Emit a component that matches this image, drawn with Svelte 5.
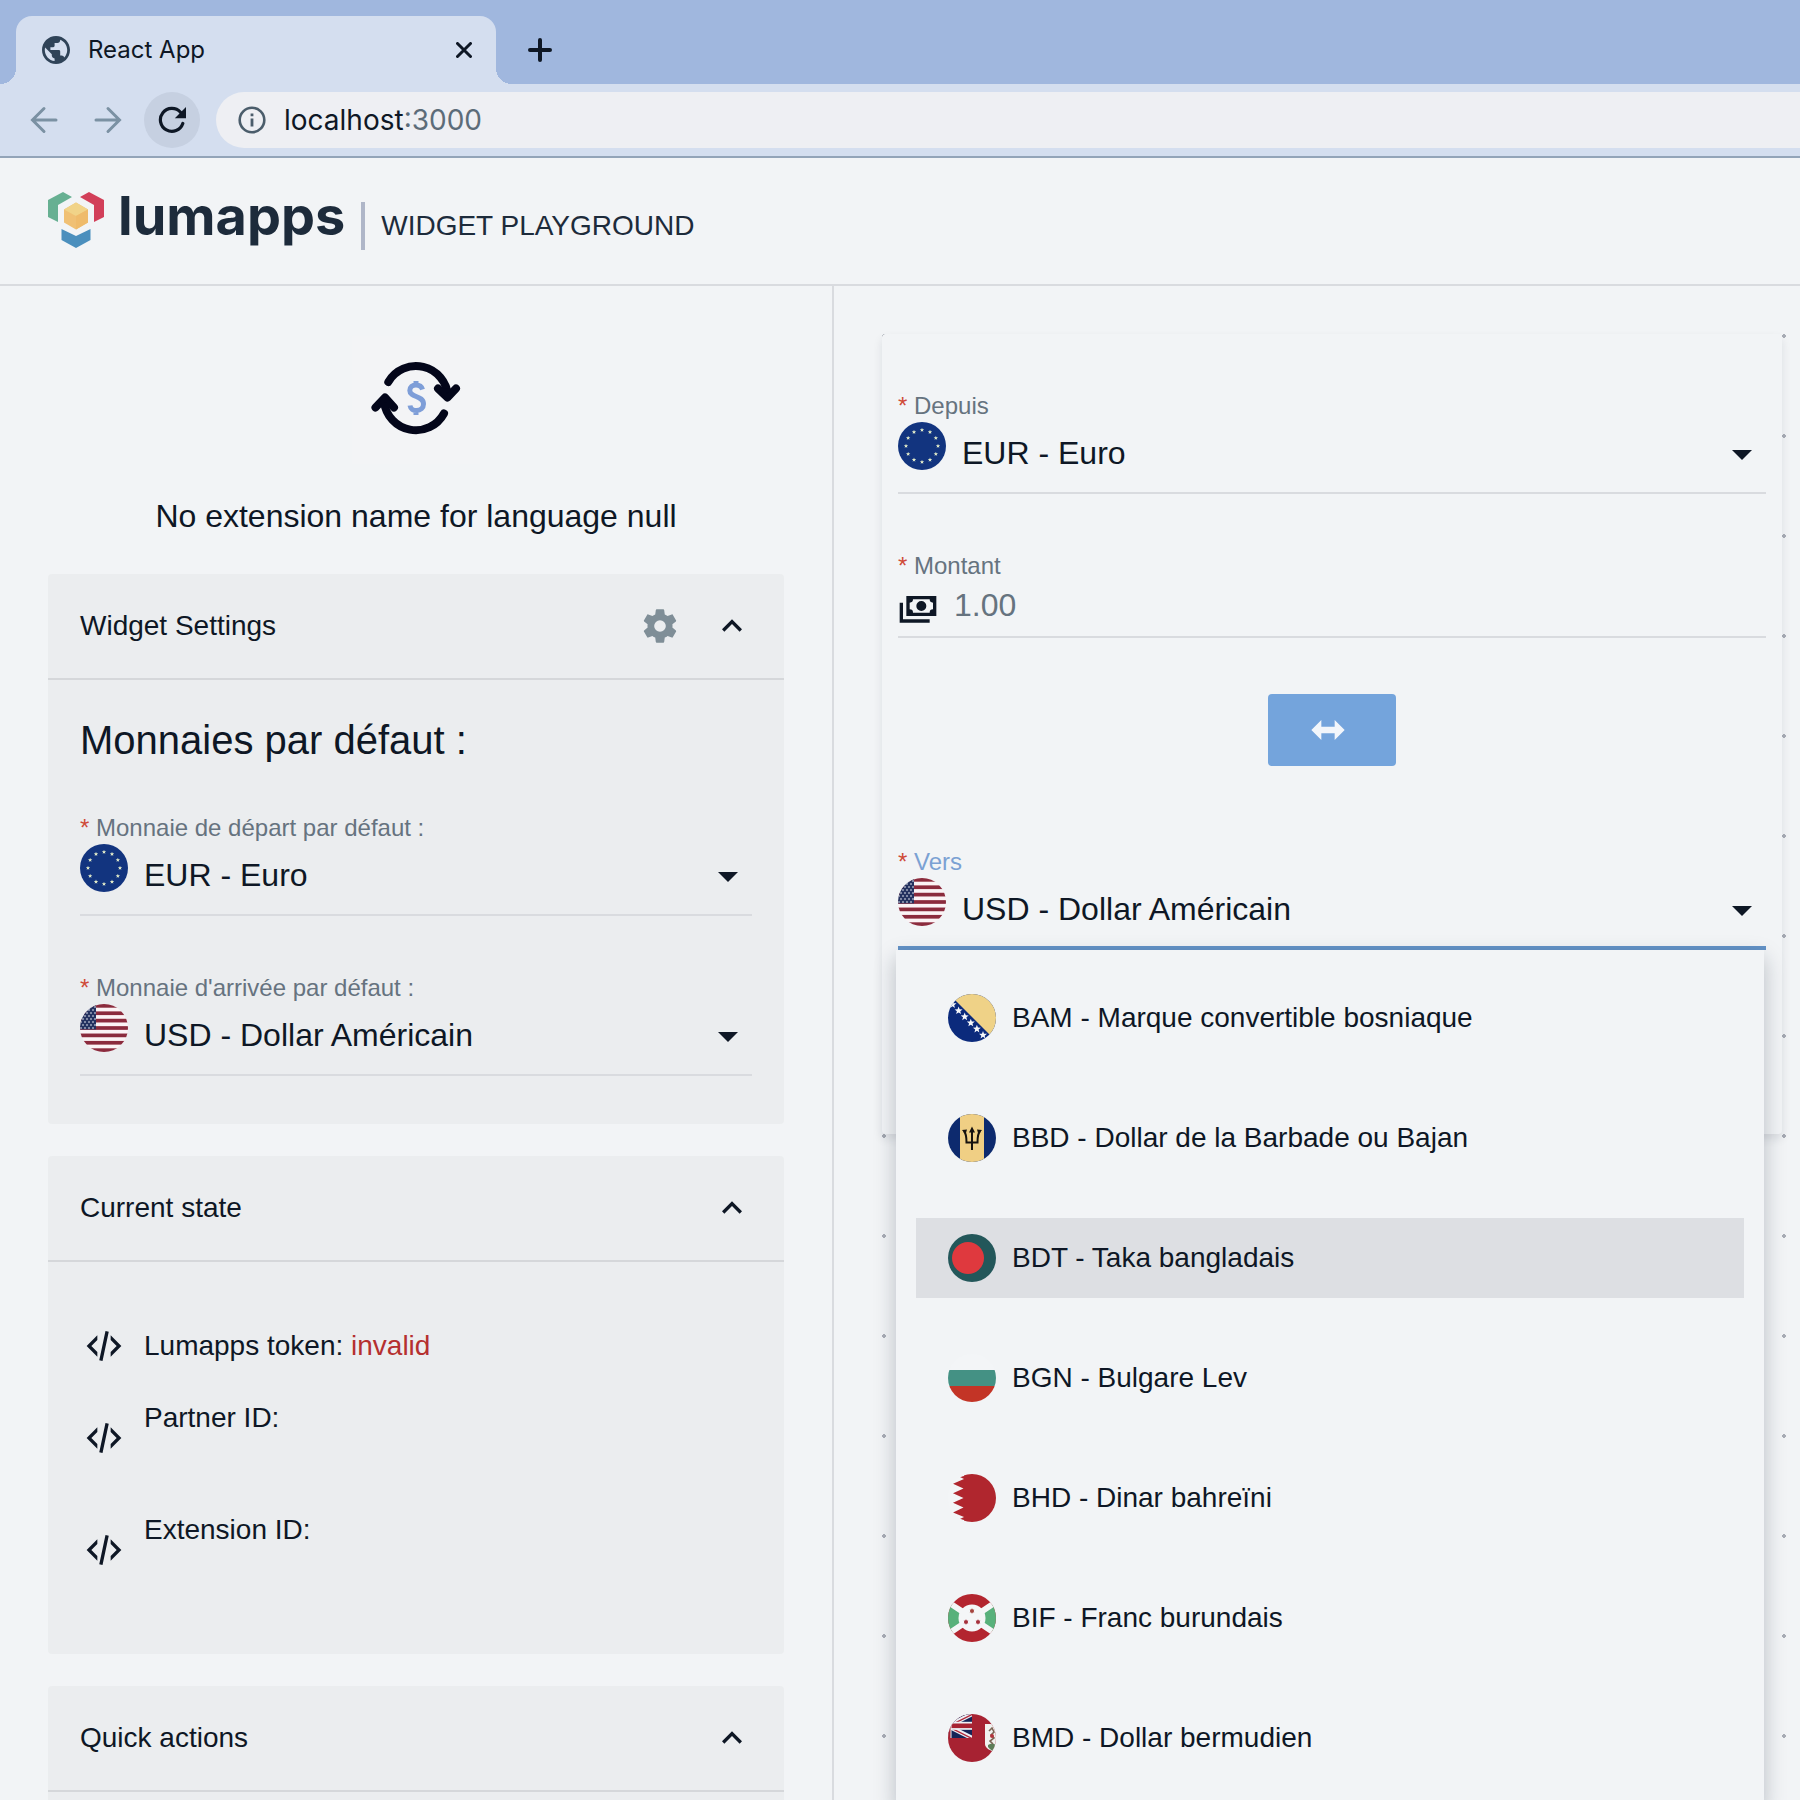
<script>
  let from = $state('EUR');
  let to = $state('USD');
  let defaultFrom = $state('EUR');
  let defaultTo = $state('USD');
  let amount = $state('');
  let active = $state('BDT');

  const currencies = [
    { code: 'EUR', name: 'Euro' },
    { code: 'USD', name: 'Dollar Américain' }
  ];

  const suggestions = [
    { code: 'BAM', name: 'Marque convertible bosniaque' },
    { code: 'BBD', name: 'Dollar de la Barbade ou Bajan' },
    { code: 'BDT', name: 'Taka bangladais' },
    { code: 'BGN', name: 'Bulgare Lev' },
    { code: 'BHD', name: 'Dinar bahreïni' },
    { code: 'BIF', name: 'Franc burundais' },
    { code: 'BMD', name: 'Dollar bermudien' }
  ];

  function star(cx, cy, r, points = 5, inner = 0.42) {
    return Array.from({ length: points * 2 }, (_, i) => {
      const a = (Math.PI * i) / points - Math.PI / 2;
      const d = i % 2 ? r * inner : r;
      return `${(cx + d * Math.cos(a)).toFixed(2)},${(cy + d * Math.sin(a)).toFixed(2)}`;
    }).join(' ');
  }

  const euStars = Array.from({ length: 12 }, (_, i) => {
    const a = (Math.PI * i) / 6;
    return star(24 + 16 * Math.sin(a), 24 - 16 * Math.cos(a), 2.3);
  });
  const usStars = [3, 6, 9, 12, 15, 18, 21, 24].flatMap((y, row) =>
    (row % 2 ? [1, 5, 9, 13] : [3, 7, 11, 15]).map((x) => [x, y])
  );
  const bamStars = [0, 1, 2, 3, 4, 5].map((i) => star(4.5 + i * 6.1, 10.6 + i * 6.1, 4.2));

  const paths = {
    up: 'M7.41,15.41L12,10.83L16.59,15.41L18,14L12,8L6,14L7.41,15.41Z',
    down: 'M7,10L12,15L17,10H7Z',
    code: 'M12.89,3L14.85,3.4L11.11,21L9.15,20.6L12.89,3M19.59,12L16,8.41V5.58L22.42,12L16,18.41V15.58L19.59,12M1.58,12L8,5.58V8.41L4.41,12L8,15.58V18.41L1.58,12Z',
    swap: 'M8,14V18L2,12L8,6V10H16V6L22,12L16,18V14H8Z',
    cash: 'M5,6H23V18H5V6M14,9A3,3 0 0,1 17,12A3,3 0 0,1 14,15A3,3 0 0,1 11,12A3,3 0 0,1 14,9M9,8A2,2 0 0,1 7,10V14A2,2 0 0,1 9,16H19A2,2 0 0,1 21,14V10A2,2 0 0,1 19,8H9M1,10H3V20H19V22H1V10Z',
    cog: 'M12,15.5A3.5,3.5 0 0,1 8.5,12A3.5,3.5 0 0,1 12,8.5A3.5,3.5 0 0,1 15.5,12A3.5,3.5 0 0,1 12,15.5M19.43,12.97C19.47,12.65 19.5,12.33 19.5,12C19.5,11.67 19.47,11.34 19.43,11L21.54,9.37C21.73,9.22 21.78,8.95 21.66,8.73L19.66,5.27C19.54,5.05 19.27,4.96 19.05,5.05L16.56,6.05C16.04,5.66 15.5,5.32 14.87,5.07L14.5,2.42C14.46,2.18 14.25,2 14,2H10C9.75,2 9.54,2.18 9.5,2.42L9.13,5.07C8.5,5.32 7.96,5.66 7.44,6.05L4.95,5.05C4.73,4.96 4.46,5.05 4.34,5.27L2.34,8.73C2.21,8.95 2.27,9.22 2.46,9.37L4.57,11C4.53,11.34 4.5,11.67 4.5,12C4.5,12.33 4.53,12.65 4.57,12.97L2.46,14.63C2.27,14.78 2.21,15.05 2.34,15.27L4.34,18.73C4.46,18.95 4.73,19.03 4.95,18.95L7.44,17.94C7.96,18.34 8.5,18.68 9.13,18.93L9.5,21.58C9.54,21.82 9.75,22 10,22H14C14.25,22 14.46,21.82 14.5,21.58L14.87,18.93C15.5,18.67 16.04,18.34 16.56,17.94L19.05,18.95C19.27,19.03 19.54,18.95 19.66,18.73L21.66,15.27C21.78,15.05 21.73,14.78 21.54,14.63L19.43,12.97Z'
  };
</script>

{#snippet icon(name)}
  <svg class="icon" viewBox="0 0 24 24" aria-hidden="true"><path d={paths[name]} /></svg>
{/snippet}

{#snippet flag(code)}
  <svg class="flag" viewBox="0 0 48 48" aria-hidden="true">
    {#if code === 'EUR'}
      <rect width="48" height="48" fill="#12347f" />
      {#each euStars as points}<polygon {points} fill="#e3ecc9" />{/each}
    {:else if code === 'USD'}
      <rect width="48" height="48" fill="#fbf3f5" />
      {#each [0, 2, 4, 6, 8, 10, 12] as n}<rect y={(n * 48) / 13} width="48" height="3.7" fill="#8b2b3d" />{/each}
      <rect width="16" height="25.4" fill="#243260" />
      {#each usStars as [x, y]}<circle cx={x} cy={y} r="0.8" fill="#f4f5fa" />{/each}
    {:else if code === 'BAM'}
      <rect width="48" height="48" fill="#0b2a7c" />
      <polygon points="0,-1 48,-1 48,47" fill="#efd287" />
      {#each bamStars as points}<polygon {points} fill="#f6f8fb" />{/each}
    {:else if code === 'BBD'}
      <rect width="48" height="48" fill="#0d2a6e" />
      <rect x="12" width="24" height="48" fill="#f0cf84" />
      <path d="M24 16V36M16 17C18.500 20 18.500 24 18.500 28.500H29.500C29.500 24 29.500 20 32 17" fill="none" stroke="#16120e" stroke-width="2" />
      <path d="M24 12.500L27 18.500H21ZM14 16L19 15.500L17.500 20.500ZM34 16L29 15.500L30.500 20.500Z" fill="#16120e" />
    {:else if code === 'BDT'}
      <rect width="48" height="48" fill="#23575a" />
      <circle cx="20" cy="24" r="16" fill="#df393e" />
    {:else if code === 'BGN'}
      <rect width="48" height="48" fill="#f3f5f7" />
      <rect y="16" width="48" height="16" fill="#449184" />
      <rect y="32" width="48" height="16" fill="#c33426" />
    {:else if code === 'BHD'}
      <rect width="48" height="48" fill="#f3f5f7" />
      <polygon points="48,0 16,0 16,2 12,3 16,5 5,9.700 15.500,14.400 5,19.200 15.500,24 5,28.800 15.500,33.600 5,38.400 16,43 12,45 16,46 16,48 48,48" fill="#b0262e" />
    {:else if code === 'BIF'}
      <rect width="48" height="48" fill="#b3252f" />
      <path d="M0 8L24 24L0 40ZM48 8L24 24L48 40Z" fill="#58b17b" />
      <path d="M0 8L48 40M48 8L0 40" stroke="#f4f6f7" stroke-width="6" />
      <circle cx="24" cy="24" r="13.500" fill="#f4f6f7" />
      <polygon points={star(24, 17, 2.7, 6, 0.6)} fill="#a5443d" />
      <polygon points={star(18, 28, 2.7, 6, 0.6)} fill="#a5303a" />
      <polygon points={star(30, 28, 2.7, 6, 0.6)} fill="#a5303a" />
    {:else if code === 'BMD'}
      <rect width="48" height="48" fill="#a72232" />
      <svg width="24" height="24" viewBox="0 0 24 24">
        <rect width="24" height="24" fill="#152457" />
        <path d="M-2 13L26 -1M-2 11L26 25" stroke="#eef0f5" stroke-width="4.500" />
        <path d="M-2 13.500L26 -0.500M-2 11.500L26 25.500" stroke="#b02a3b" stroke-width="1.400" />
        <rect y="7.800" width="24" height="8" fill="#eef0f5" />
        <rect y="9.500" width="24" height="4.600" fill="#a72232" />
        <rect width="3.500" height="24" fill="#eef0f5" />
        <rect width="2.500" height="24" fill="#a72232" />
      </svg>
      <path d="M37 10H48V38C42 37 37 34 37 30Z" fill="#f1f1ef" />
      <path d="M40 31Q44 28 48 31V38Q43 37 40 33Z" fill="#5d7d58" />
      <path d="M41 17L44 14L46 18L43 21L46 24L42 27L45 30" fill="none" stroke="#7c6555" stroke-width="1.600" />
      <circle cx="44" cy="22" r="2" fill="#b3353d" />
    {/if}
  </svg>
{/snippet}

<div class="window">
  <div class="tabstrip">
    <div class="tab">
      <svg class="globe" viewBox="2 2 20 20" aria-hidden="true">
        <path d="M12 2C6.480 2 2 6.480 2 12s4.480 10 10 10 10-4.480 10-10S17.520 2 12 2zm-1 17.930c-3.950-.490-7-3.850-7-7.930 0-.620.080-1.210.210-1.790L9 15v1c0 1.100.900 2 2 2v1.930zm6.900-2.540c-.260-.810-1-1.390-1.900-1.390h-1v-3c0-.550-.450-1-1-1H8v-2h2c.550 0 1-.450 1-1V7h2c1.100 0 2-.900 2-2v-.410c2.930 1.190 5 4.060 5 7.410 0 2.080-.800 3.970-2.100 5.390z" fill="#2f4358" />
      </svg>
      <span class="tab-title">React App</span>
      <button class="plain" aria-label="Close tab">
        <svg class="close" viewBox="0 0 16 16" aria-hidden="true"><path d="M1.500 1.500L14.500 14.500M14.500 1.500L1.500 14.500" /></svg>
      </button>
    </div>
    <button class="plain" aria-label="New tab">
      <svg class="plus" viewBox="0 0 24 24" aria-hidden="true"><path d="M12 2V22M2 12H22" /></svg>
    </button>
  </div>

  <div class="toolbar">
    <button class="plain nav" aria-label="Back">
      <svg class="arrow" viewBox="0 0 28 28" aria-hidden="true"><path d="M26 14H3M14 2.500L2.500 14L14 25.500" /></svg>
    </button>
    <button class="plain nav" aria-label="Forward">
      <svg class="arrow" viewBox="0 0 28 28" aria-hidden="true"><path d="M2 14H25M14 2.500L25.500 14L14 25.500" /></svg>
    </button>
    <button class="plain reload" aria-label="Reload">
      <svg class="reload-icon" viewBox="0 0 28 28" aria-hidden="true">
        <path d="M24.800 17.500A11.500 11.500 0 1 1 22.500 6.200L24.500 8.500" fill="none" stroke="#0e1725" stroke-width="3.200" stroke-linecap="round" />
        <path d="M28 1V12.200H16.800Z" fill="#0e1725" />
      </svg>
    </button>
    <div class="omnibox">
      <svg class="info" viewBox="0 0 28 28" aria-hidden="true">
        <circle cx="14" cy="14" r="12.300" fill="none" stroke-width="2.600" />
        <path d="M14 12.500V20.500M14 7.500V10.300" stroke-width="2.800" />
      </svg>
      <div class="url">
        <input class="host" aria-label="Address" value="localhost" /><span class="port">:3000</span>
      </div>
    </div>
  </div>

  <header class="masthead">
    <a class="brand" href="#top">
      <svg class="mark" viewBox="0 0 56 56" aria-hidden="true">
        <polygon points="0,8 15,0 24,5 10,13 10,30 0,25" fill="#67b092" />
        <polygon points="56,8 41,0 32,5 46,13 46,30 56,25" fill="#d23f59" />
        <polygon points="28,10.500 40,17.500 40,30.500 28,37.500 16,30.500 16,17.500" fill="#f0c074" />
        <polygon points="28,10.500 40,17.500 28,24 16,17.500" fill="#f1d388" />
        <polygon points="28,24 40,17.500 40,30.500 28,37.500" fill="#efbb6b" />
        <polygon points="13.500,37 28,44 42.500,37 42.500,48 28,56 13.500,48" fill="#4b8fbd" />
      </svg>
      <span class="wordmark">lumapps</span>
    </a>
    <h1 class="app-title">WIDGET PLAYGROUND</h1>
  </header>

  <main class="split">
    <section class="sidebar">
      <svg class="ext-logo" viewBox="0 0 128 128" aria-hidden="true">
        <rect width="128" height="128" fill="#f3f4f6" />
        <g fill="none" stroke="#03061a" stroke-width="8" stroke-linecap="round" stroke-linejoin="round">
          <path d="M36.300 46A32 32 0 0 1 95.900 60" />
          <path d="M92 77.500A32 32 0 0 1 32.100 66" />
          <path d="M86 52.500L95.500 61.500L104 52.500M23.500 71.500L33 61.500L42 71.500" />
          <path d="M89 54L95.500 61L100 55Z" stroke-width="4" fill="#03061a" />
          <path d="M28 69L33 62L39 69Z" stroke-width="4" fill="#03061a" />
        </g>
        <path d="M70.500 53.500C69.500 50 66.500 49 64 49C60.500 49 57.800 51.200 57.800 54.500C57.800 62 71.500 59 71.500 68C71.500 72 68.500 74.500 64.500 74.500C61.500 74.500 58.500 73 58 69.500M64 45V49M64 75V79" fill="none" stroke="#7e9ed8" stroke-width="5" />
      </svg>
      <h2 class="ext-name">No extension name for language null</h2>

      <div class="cards">
        <section class="card">
          <div class="card-head">
            <h3>Widget Settings</h3>
            <button class="plain cog" aria-label="Settings">{@render icon('cog')}</button>
            <button class="plain" aria-label="Collapse Widget Settings">{@render icon('up')}</button>
          </div>
          <div class="settings">
            <h4>Monnaies par défaut :</h4>
            <div class="fields">
              <div class="field">
                <label for="default-from"><em>*</em> Monnaie de départ par défaut :</label>
                <div class="control">
                  {@render flag(defaultFrom)}
                  <select id="default-from" bind:value={defaultFrom}>
                    {#each currencies as c}<option value={c.code}>{c.code} - {c.name}</option>{/each}
                  </select>
                  {@render icon('down')}
                </div>
              </div>
              <div class="field">
                <label for="default-to"><em>*</em> Monnaie d'arrivée par défaut :</label>
                <div class="control">
                  {@render flag(defaultTo)}
                  <select id="default-to" bind:value={defaultTo}>
                    {#each currencies as c}<option value={c.code}>{c.code} - {c.name}</option>{/each}
                  </select>
                  {@render icon('down')}
                </div>
              </div>
            </div>
          </div>
        </section>

        <section class="card">
          <div class="card-head">
            <h3>Current state</h3>
            <button class="plain" aria-label="Collapse Current state">{@render icon('up')}</button>
          </div>
          <ul class="state">
            <li>{@render icon('code')}<p>Lumapps token: <span class="invalid">invalid</span></p></li>
            <li class="tall">{@render icon('code')}<p>Partner ID:</p></li>
            <li class="tall">{@render icon('code')}<p>Extension ID:</p></li>
          </ul>
        </section>

        <section class="card">
          <div class="card-head">
            <h3>Quick actions</h3>
            <button class="plain" aria-label="Collapse Quick actions">{@render icon('up')}</button>
          </div>
          <div class="actions"></div>
        </section>
      </div>
    </section>

    <section class="preview">
      <div class="canvas">
        <form class="widget">
          <div class="field">
            <label for="from"><em>*</em> Depuis</label>
            <div class="control">
              {@render flag(from)}
              <select id="from" bind:value={from}>
                {#each currencies as c}<option value={c.code}>{c.code} - {c.name}</option>{/each}
              </select>
              {@render icon('down')}
            </div>
          </div>
          <div class="field">
            <label for="amount"><em>*</em> Montant</label>
            <div class="control amount">
              {@render icon('cash')}
              <input id="amount" placeholder="1.00" bind:value={amount} />
            </div>
          </div>
          <button
            class="swap"
            type="button"
            aria-label="Inverser"
            onclick={() => ([from, to] = [to, from])}>{@render icon('swap')}</button>
          <div class="field focused">
            <label for="to"><em>*</em> Vers</label>
            <div class="control">
              {@render flag(to)}
              <select id="to" bind:value={to}>
                {#each currencies as c}<option value={c.code}>{c.code} - {c.name}</option>{/each}
              </select>
              {@render icon('down')}
            </div>
            <ul class="menu">
              {#each suggestions as s}
                <li>
                  <button type="button" class:active={s.code === active} onmouseenter={() => (active = s.code)}>
                    {@render flag(s.code)}<span>{s.code} - {s.name}</span>
                  </button>
                </li>
              {/each}
            </ul>
          </div>
        </form>
      </div>
    </section>
  </main>
</div>

<style>
  :global(body) {
    margin: 0;
    background: #f2f4f6;
  }
  .window {
    display: flex;
    flex-direction: column;
    height: 100vh;
    overflow: hidden;
    background: #f2f4f6;
    color: #0e1725;
    font-family: 'Liberation Sans', Arial, sans-serif;
    font-size: 28px;
    line-height: 40px;
  }
  .window * {
    box-sizing: border-box;
  }
  h1, h2, h3, h4, p, ul {
    margin: 0;
    padding: 0;
    font-weight: 400;
    font-size: inherit;
  }
  ul {
    list-style: none;
  }
  svg {
    display: block;
    flex: none;
  }
  button, input, select {
    margin: 0;
    padding: 0;
    border: 0;
    background: none;
    color: inherit;
    font: inherit;
    outline: none;
  }
  .plain {
    display: flex;
    align-items: center;
    justify-content: center;
  }
  .icon {
    width: 40px;
    height: 40px;
    fill: currentColor;
  }
  .flag {
    width: 48px;
    height: 48px;
    border-radius: 50%;
  }

  .tabstrip {
    display: flex;
    flex: none;
    align-items: center;
    gap: 32px;
    padding: 16px 16px 0;
    background: #a0b7de;
    font-family: Inter, sans-serif;
    font-size: 24px;
  }
  .tab {
    position: relative;
    display: flex;
    align-items: center;
    width: 480px;
    height: 68px;
    padding: 0 24px 0 26px;
    border-radius: 16px 16px 0 0;
    background: #d4deef;
  }
  .tab::before,
  .tab::after {
    content: '';
    position: absolute;
    bottom: 0;
    width: 16px;
    height: 16px;
  }
  .tab::before {
    right: 100%;
    background: radial-gradient(circle at 0 0, transparent 16px, #d4deef 16px);
  }
  .tab::after {
    left: 100%;
    background: radial-gradient(circle at 100% 0, transparent 16px, #d4deef 16px);
  }
  .globe {
    width: 28px;
    height: 28px;
    margin-right: 18px;
  }
  .tab-title {
    flex: 1;
  }
  .close {
    width: 16px;
    height: 16px;
  }
  .plus {
    width: 24px;
    height: 24px;
  }
  .close path,
  .plus path {
    stroke: #0e1725;
    stroke-width: 3;
    stroke-linecap: round;
  }
  .plus path {
    stroke-width: 4;
  }

  .toolbar {
    display: flex;
    flex: none;
    align-items: center;
    gap: 8px;
    height: 74px;
    padding-left: 16px;
    border-bottom: 2px solid #93a4b8;
    background: #d4deef;
    font-family: Inter, sans-serif;
  }
  .nav,
  .reload {
    width: 56px;
    height: 56px;
    border-radius: 50%;
  }
  .reload {
    background: #c6d0e1;
  }
  .reload-icon,
  .arrow {
    width: 28px;
    height: 28px;
  }
  .arrow path {
    fill: none;
    stroke: #7b91a3;
    stroke-width: 3;
    stroke-linecap: round;
  }
  .omnibox {
    display: flex;
    flex: 1;
    align-items: center;
    gap: 18px;
    height: 56px;
    margin-left: 8px;
    padding-left: 22px;
    border-radius: 28px 0 0 28px;
    background: #eeeff3;
  }
  .info {
    width: 28px;
    height: 28px;
    stroke: #4b5d6b;
  }
  .url {
    display: flex;
    flex: 1;
  }
  .host {
    field-sizing: content;
  }
  .port {
    color: #5c6c79;
  }

  .masthead {
    display: flex;
    flex: none;
    align-items: flex-end;
    gap: 16px;
    padding: 34px 48px;
    border-bottom: 2px solid #d9dbdf;
    color: #1d2b3b;
  }
  .brand {
    display: flex;
    align-items: center;
    align-self: flex-start;
    gap: 14px;
    height: 56px;
    color: inherit;
    text-decoration: none;
  }
  .mark {
    width: 56px;
    height: 56px;
  }
  .wordmark {
    padding-bottom: 8px;
    font-family: Inter, sans-serif;
    font-size: 54px;
    font-weight: 700;
    line-height: 48px;
  }
  .app-title {
    margin-top: 10px;
    padding-left: 16px;
    border-left: 4px solid #afb6c8;
    line-height: 48px;
  }

  .split {
    display: grid;
    flex: 1;
    grid-template-columns: 834fr 966fr;
    min-height: 0;
    overflow: hidden;
  }
  .sidebar {
    padding: 50px 48px 0;
    border-right: 2px solid #d9dbdf;
  }
  .ext-logo {
    width: 128px;
    height: 128px;
    margin: 0 auto;
  }
  .ext-name {
    margin: 32px 0 38px;
    font-size: 32px;
    text-align: center;
  }
  .cards {
    display: grid;
    gap: 32px;
  }
  .card {
    border-radius: 4px;
    background: #ebedef;
  }
  .card-head {
    display: flex;
    align-items: center;
    gap: 32px;
    height: 106px;
    padding: 0 32px;
    border-bottom: 2px solid #d5d7da;
  }
  .card-head h3 {
    flex: 1;
  }
  .cog {
    color: #7f8e97;
  }
  .settings {
    padding: 36px 32px 48px;
  }
  .settings h4 {
    margin-bottom: 48px;
    font-size: 40px;
    line-height: 48px;
  }
  .fields {
    display: grid;
    gap: 56px;
  }

  .field {
    position: relative;
  }
  .field label {
    display: block;
    color: #66737f;
    font-size: 24px;
    line-height: 32px;
  }
  .field em {
    color: #cf4a38;
    font-style: normal;
  }
  .control {
    display: flex;
    gap: 16px;
    height: 72px;
    border-bottom: 2px solid #d9dbdf;
    font-size: 32px;
  }
  .control select {
    flex: 1;
    min-width: 0;
    height: 62px;
    appearance: none;
  }
  .control .icon {
    width: 48px;
    height: 48px;
    margin-top: 8px;
  }
  .amount {
    height: 56px;
  }
  .amount .icon {
    width: 40px;
    height: 40px;
    margin-top: 4px;
  }
  .amount input {
    flex: 1;
    height: 46px;
  }
  .amount input::placeholder {
    color: #66737f;
    opacity: 1;
  }
  .focused label {
    color: #7ba1d3;
  }
  .focused .control {
    border-bottom: 4px solid #6392c6;
  }

  .state {
    padding: 48px 32px;
  }
  .state li {
    display: flex;
    align-items: center;
    gap: 20px;
    height: 72px;
    padding-left: 4px;
  }
  .state .tall {
    height: 112px;
  }
  .tall p {
    min-height: 80px;
  }
  .invalid {
    color: #b5302f;
  }
  .actions {
    height: 120px;
  }

  .preview {
    padding: 48px 0 0 48px;
  }
  .canvas {
    height: 100%;
    padding-right: 18px;
    background: radial-gradient(circle at 2px 2px, #a9adb6 2px, transparent 2px) 0 0 / 100px 100px;
  }
  .widget {
    display: flex;
    flex-direction: column;
    gap: 56px;
    padding: 56px 16px 184px;
    border-radius: 4px;
    background: #f2f4f6;
    box-shadow: 0 5px 10px rgba(20, 30, 50, 0.1);
  }
  .swap {
    align-self: center;
    padding: 16px 48px 16px 40px;
    border-radius: 4px;
    background: #74a4dc;
    color: #f2f6fb;
  }
  .focused {
    margin-top: 24px;
  }
  .menu {
    position: absolute;
    top: 100%;
    left: -2px;
    right: 2px;
    display: grid;
    gap: 40px;
    padding: 28px 20px;
    background: #f2f4f6;
    box-shadow: 0 8px 20px rgba(20, 30, 50, 0.26);
  }
  .menu button {
    display: flex;
    align-items: center;
    gap: 16px;
    width: 100%;
    height: 80px;
    padding: 0 32px;
    text-align: left;
  }
  .menu .active {
    background: #dddfe3;
  }
</style>
